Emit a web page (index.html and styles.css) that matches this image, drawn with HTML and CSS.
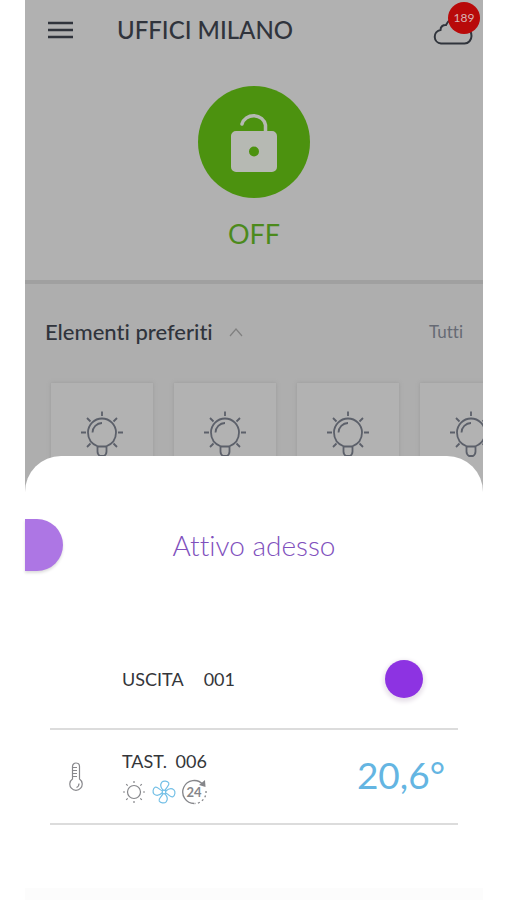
FILE: index.html
```html
<!DOCTYPE html>
<html lang="it">
<head>
<meta charset="utf-8">
<meta name="viewport" content="width=device-width, initial-scale=1">
<title>Uffici Milano</title>
<link rel="stylesheet" href="styles.css">
</head>
<body>
<svg class="defs" aria-hidden="true">
  <symbol id="bulb" viewBox="0 0 44 50">
    <g fill="none" stroke="currentColor" stroke-width="1.8">
      <path d="M18 36.500C11.500 34 8 29 8 22.500a14 14 0 0 1 28 0C36 29 32.500 34 26 36.500Z"/>
      <path d="M12.500 22.500a9.500 9.500 0 0 1 9.500-9.500M17.500 36.500v5q0 3 2.500 4.500h4q2.500-1.500 2.500-4.500v-5"/>
      <path d="M22 1.500v4.500M1 22.500h5M38 22.500h5M7 8l3.500 3.500M37 8l-3.500 3.500M7 37l3.500-3.500M37 37l-3.500-3.500"/>
    </g>
  </symbol>
</svg>
<div class="app">
  <main class="home">
    <header class="topbar">
      <button class="icon-button" aria-label="Menu">
        <svg width="25" height="18" viewBox="0 0 25 18" fill="none" stroke="currentColor" stroke-width="2.6"><path d="M0 2h25M0 9h25M0 16h25"/></svg>
      </button>
      <h1 class="site">UFFICI MILANO</h1>
      <button class="icon-button cloud" aria-label="Notifiche">
        <svg width="40" height="32" viewBox="0 0 40 32" fill="none" stroke="currentColor" stroke-width="2"><path d="M8 29.500a6.800 6.800 0 0 1-.5-13.500c0-3.500 2.500-5.200 5.500-5C15 7 19 4 23 4c6 0 10 4 10.500 10 3 1.500 5 4 5 8 0 4-3 7.500-7 7.500Z"/></svg>
        <span class="badge">189</span>
      </button>
    </header>
    <section class="alarm">
      <button class="lock" aria-label="Inserisci allarme">
        <svg width="48" height="62" viewBox="0 0 48 62"><path d="M12 13a12 11 0 0 1 23.500 1v8" fill="none" stroke="currentColor" stroke-width="3.500" stroke-linecap="round"/><path fill="currentColor" fill-rule="evenodd" d="M6 20h36a5 5 0 0 1 5 5v31a5 5 0 0 1-5 5H6a5 5 0 0 1-5-5V25a5 5 0 0 1 5-5Zm18 15.500a5 5 0 1 0 0 10 5 5 0 0 0 0-10Z"/></svg>
      </button>
      <p class="state">OFF</p>
    </section>
    <section class="favourites">
      <div class="favourites-head">
        <h2 class="heading">Elementi preferiti</h2>
        <button class="icon-button chevron" aria-label="Comprimi">
          <svg width="14" height="10" viewBox="0 0 14 10" fill="none" stroke="currentColor" stroke-width="1.200"><path d="M1 9l6-7 6 7"/></svg>
        </button>
        <a class="all" href="#">Tutti</a>
      </div>
      <div class="cards">
        <button class="card" aria-label="Luce 1"><svg class="bulb"><use href="#bulb"/></svg></button>
        <button class="card" aria-label="Luce 2"><svg class="bulb"><use href="#bulb"/></svg></button>
        <button class="card" aria-label="Luce 3"><svg class="bulb"><use href="#bulb"/></svg></button>
        <button class="card" aria-label="Luce 4"><svg class="bulb"><use href="#bulb"/></svg></button>
      </div>
    </section>
  </main>
  <section class="sheet">
    <header class="sheet-head">
      <button class="handle" aria-label="Indietro"></button>
      <h2 class="sheet-title">Attivo adesso</h2>
    </header>
    <ul class="devices">
      <li class="device">
        <span></span>
        <span class="name">USCITA <span class="code">001</span></span>
        <button class="power" aria-label="Spegni uscita 001"></button>
      </li>
      <li class="device climate">
        <svg class="thermo" width="14" height="30" viewBox="0 0 14 30" fill="none" stroke="currentColor" stroke-width="1.200"><path d="M3.500 17V4.500a3.500 3.500 0 0 1 7 0V17a6.200 6.200 0 1 1-7 0Z"/><path d="M4 5.500h4M4 8.500h4M4 11.500h4M4 14.500h4M10 21.500q0 3-2.500 4" /></svg>
        <div class="info">
          <span class="name">TAST. <span class="code near">006</span></span>
          <span class="modes">
            <svg width="24" height="24" viewBox="0 0 24 24" fill="none" stroke="currentColor" stroke-width="1.200"><circle cx="12" cy="12" r="6.500"/><path d="M12 1v2M12 21v2M1 12h2M21 12h2M4.200 4.200l1.500 1.500M18.300 18.300l1.500 1.500M4.200 19.800l1.500-1.500M18.300 5.700l1.500-1.500"/></svg>
            <svg class="fan" width="24" height="24" viewBox="0 0 24 24" fill="none" stroke="currentColor" stroke-width="1.200"><g transform="rotate(8 12 12)"><path d="M11 10.500C8 8 7 5 8.500 2.500 10 .5 14 .5 15.500 2.500 17 5 13 7 13 10.500"/><path d="M13.500 11C16 8 19 7 21.500 8.500c2 1.500 2 5.500 0 7C19 17 17 13 13.500 13"/><path d="M13 13.500c3 2.500 4 5.500 2.500 8-1.500 2-5.500 2-7 0C7 19 11 17 11 13.500"/><path d="M10.500 13C8 16 5 17 2.500 15.500c-2-1.500-2-5.500 0-7C5 7 7 11 10.500 11"/><circle cx="12" cy="12" r="1.800"/></g></svg>
            <svg class="clock" width="26" height="26" viewBox="0 0 26 26" fill="none" stroke="currentColor"><path stroke-width="1.300" d="M12.500 24.500a11.500 11.500 0 1 1 8.500-19"/><path stroke-width="1.300" stroke-dasharray="2 2.500" d="M24 12a11.500 11.500 0 0 1-11 12.500"/><path fill="currentColor" stroke="none" d="M23 1l.5 7-6.500-2Z"/><text class="hours" x="12" y="18" text-anchor="middle">24</text></svg>
          </span>
        </div>
        <span class="temp">20,6°</span>
      </li>
    </ul>
    <footer class="sheet-foot"></footer>
  </section>
</div>
</body>
</html>
```
FILE: styles.css
```css
* { box-sizing: border-box; }

body {
  margin: 0;
  background: #fff;
  color: #30343c;
  font-family: Lato, "Liberation Sans", sans-serif;
  font-variant-ligatures: none;
}

button {
  padding: 0;
  border: 0;
  background: none;
  color: inherit;
  font: inherit;
}

h1, h2, p, ul { margin: 0; padding: 0; }

svg { display: block; }

.defs { position: absolute; width: 0; height: 0; }

.app {
  display: flex;
  flex-direction: column;
  min-height: 100vh;
  margin: 0 24px 0 25px;
}

.home {
  overflow: hidden;
  background: #b1b1b1;
}

.topbar {
  display: flex;
  align-items: center;
  height: 60px;
  padding: 0 10px 0 23px;
}

.site {
  flex: 1;
  margin-left: 44px;
  font-size: 24px;
  line-height: 32px;
  font-weight: 500;
}

.cloud { position: relative; }

.badge {
  position: absolute;
  top: -12px;
  right: -7px;
  width: 32px;
  height: 32px;
  border-radius: 50%;
  background: #b80a0a;
  color: #d9b5b5;
  font-size: 12px;
  line-height: 32px;
  text-align: center;
}

.alarm {
  display: flex;
  flex-direction: column;
  align-items: center;
  gap: 20px;
  height: 224px;
  padding-top: 26px;
  border-bottom: 4px solid #a0a0a0;
}

.lock {
  display: grid;
  place-items: center;
  width: 112px;
  height: 112px;
  border-radius: 50%;
  background: #4c920f;
  color: #b6b9b3;
}

.state {
  color: #4c8a1c;
  font-size: 27px;
  line-height: 32px;
}

.favourites { background: #aeaeae; }

.favourites-head {
  display: flex;
  align-items: center;
  height: 99px;
  padding: 0 20px 4px;
}

.heading {
  font-size: 22px;
  line-height: 28px;
  font-weight: 500;
}

.chevron { margin-left: 16px; color: #808080; }

.all {
  margin-left: auto;
  color: #666a74;
  font-size: 17px;
  line-height: 24px;
  text-decoration: none;
}

.cards {
  display: flex;
  gap: 21px;
  padding-left: 26px;
}

.card {
  display: flex;
  flex: 0 0 102px;
  justify-content: center;
  height: 110px;
  padding-top: 27px;
  background: #b2b2b2;
  box-shadow: 0 0 4px #9a9a9a;
  color: #5c606a;
}

.bulb { flex: none; width: 44px; height: 50px; }

.sheet {
  position: relative;
  display: flex;
  flex: 1;
  flex-direction: column;
  margin-top: -37px;
  border-radius: 36px 36px 0 0;
  background: #fff;
}

.sheet-head {
  display: grid;
  grid-template-columns: 38px 1fr 38px;
  align-items: center;
  padding-top: 63px;
}

.handle {
  height: 52px;
  border-radius: 0 26px 26px 0;
  background: #ad76e4;
  box-shadow: 0 2px 3px #ddd;
}

.sheet-title {
  color: #8050bd;
  font-size: 28px;
  line-height: 34px;
  font-weight: 300;
  text-align: center;
}

.devices {
  padding: 58px 25px 0;
  list-style: none;
}

.device {
  display: grid;
  grid-template-columns: 52px 1fr auto;
  column-gap: 20px;
  align-items: center;
  height: 101px;
  border-bottom: 2px solid #dcdcdc;
}

.climate { height: 95px; }

.name {
  color: #34363a;
  font-size: 18px;
  line-height: 24px;
}

.code { margin-left: 16px; }

.near { margin-left: 4px; }

.power {
  width: 38px;
  height: 38px;
  margin-right: 35px;
  border-radius: 50%;
  background: #8d33e2;
  box-shadow: 0 2px 4px 2px #e8e2ea;
}

.thermo { justify-self: center; color: #88888c; }

.info { display: grid; gap: 6px; }

.modes {
  display: flex;
  align-items: center;
  gap: 6px;
  color: #85868a;
}

.fan { color: #72bfe6; }

.hours {
  fill: currentColor;
  stroke: none;
  font-size: 13px;
  font-weight: 700;
}

.temp {
  margin-right: 13px;
  padding-bottom: 4px;
  color: #64b5e2;
  font-size: 37px;
  line-height: 44px;
}

.sheet-foot {
  height: 12px;
  margin-top: auto;
  background: #fcfcfc;
}
```
